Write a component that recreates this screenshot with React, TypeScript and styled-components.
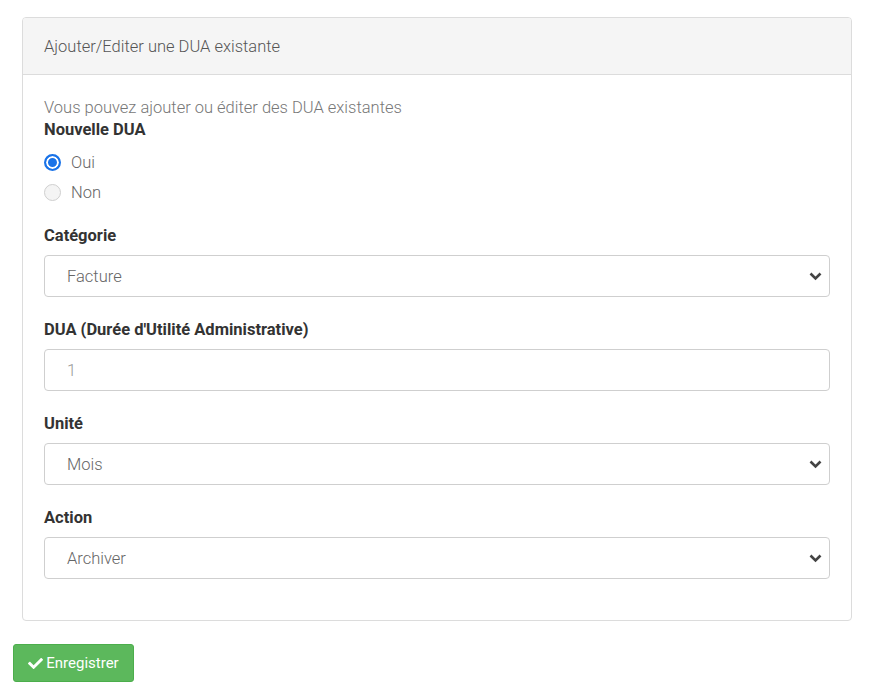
import React from 'react'
import styled, { createGlobalStyle } from 'styled-components'
import { FaCheck } from 'react-icons/fa'

const GlobalStyle = createGlobalStyle`
  body {
    margin: 0;
    background: #fff;
    font-family: Roboto, "Liberation Sans", sans-serif;
  }
`

const fields = [
  { label: 'Catégorie', value: 'Facture', select: true },
  { label: "DUA (Durée d'Utilité Administrative)", value: '1', select: false },
  { label: 'Unité', value: 'Mois', select: true },
  { label: 'Action', value: 'Archiver', select: true },
]

const Chevron = () => (
  <svg width="13" height="9" viewBox="0 0 13 9">
    <path d="M1.5 1.5 L6.5 6.5 L11.5 1.5" fill="none" stroke="#444" strokeWidth="2.6" />
  </svg>
)

const App = () => {
  return (
    <Page>
      <GlobalStyle />
      <Card>
        <CardHeader>Ajouter/Editer une DUA existante</CardHeader>
        <CardBody>
          <Intro>Vous pouvez ajouter ou éditer des DUA existantes</Intro>
          <Label>Nouvelle DUA</Label>
          <RadioList>
            <RadioRow>
              <Radio $checked />
              <RadioText>Oui</RadioText>
            </RadioRow>
            <RadioRow>
              <Radio />
              <RadioText>Non</RadioText>
            </RadioRow>
          </RadioList>
          {fields.map((f) => (
            <Group key={f.label}>
              <Label>{f.label}</Label>
              <Field $muted={!f.select}>
                <span>{f.value}</span>
                {f.select && <Chevron />}
              </Field>
            </Group>
          ))}
        </CardBody>
      </Card>
      <SaveButton>
        <FaCheck size={15} />
        Enregistrer
      </SaveButton>
    </Page>
  )
}

export default App

const Page = styled.div`
  padding: 17px 17px 14px 13px;
  width: 869px;
  box-sizing: border-box;
`

const Card = styled.div`
  margin-left: 9px;
  width: 830px;
  box-sizing: border-box;
  border: 1px solid #dcdcdc;
  border-radius: 4px;
  overflow: hidden;
`

const CardHeader = styled.div`
  height: 57px;
  box-sizing: border-box;
  padding: 0 21px;
  display: flex;
  align-items: center;
  background: #f5f5f5;
  border-bottom: 1px solid #dcdcdc;
  color: #555;
  font-size: 16.5px;
  font-weight: 300;
`

const CardBody = styled.div`
  padding: 22px 21px 41px 21px;
`

const Intro = styled.div`
  color: #777;
  font-size: 16.5px;
  font-weight: 300;
  line-height: 22px;
`

const Label = styled.div`
  color: #333;
  font-size: 16.5px;
  font-weight: 700;
  line-height: 22px;
  margin-bottom: 8px;
`

const RadioList = styled.div`
  margin: -2px 0 18px;
`

const RadioRow = styled.div`
  display: flex;
  align-items: center;
  gap: 10px;
  height: 30px;
`

const Radio = styled.span<{ $checked?: boolean }>`
  width: 17px;
  height: 17px;
  box-sizing: border-box;
  border-radius: 50%;
  border: ${(p) => (p.$checked ? '2px solid #1a73e8' : '1px solid #cfcfcf')};
  background: ${(p) => (p.$checked ? '#1a73e8' : '#f4f4f4')};
  box-shadow: ${(p) => (p.$checked ? 'inset 0 0 0 2px #fff' : 'none')};
`

const RadioText = styled.span`
  color: #666;
  font-size: 16.5px;
  font-weight: 300;
`

const Group = styled.div`
  & + & {
    margin-top: 22px;
  }
`

const Field = styled.div<{ $muted?: boolean }>`
  height: 42px;
  box-sizing: border-box;
  border: 1px solid #cfcfcf;
  border-radius: 4px;
  padding: 0 7px 0 22px;
  display: flex;
  align-items: center;
  justify-content: space-between;
  color: ${(p) => (p.$muted ? '#999' : '#666')};
  font-size: 16.5px;
  font-weight: 300;
`

const SaveButton = styled.button`
  margin-top: 23px;
  height: 38px;
  width: 121px;
  display: flex;
  align-items: center;
  justify-content: center;
  gap: 3px;
  background: #5cb85c;
  border: 1px solid #4cae4c;
  border-radius: 3px;
  color: #fff;
  font-family: Roboto, "Liberation Sans", sans-serif;
  font-size: 15px;
  padding: 0;
`
